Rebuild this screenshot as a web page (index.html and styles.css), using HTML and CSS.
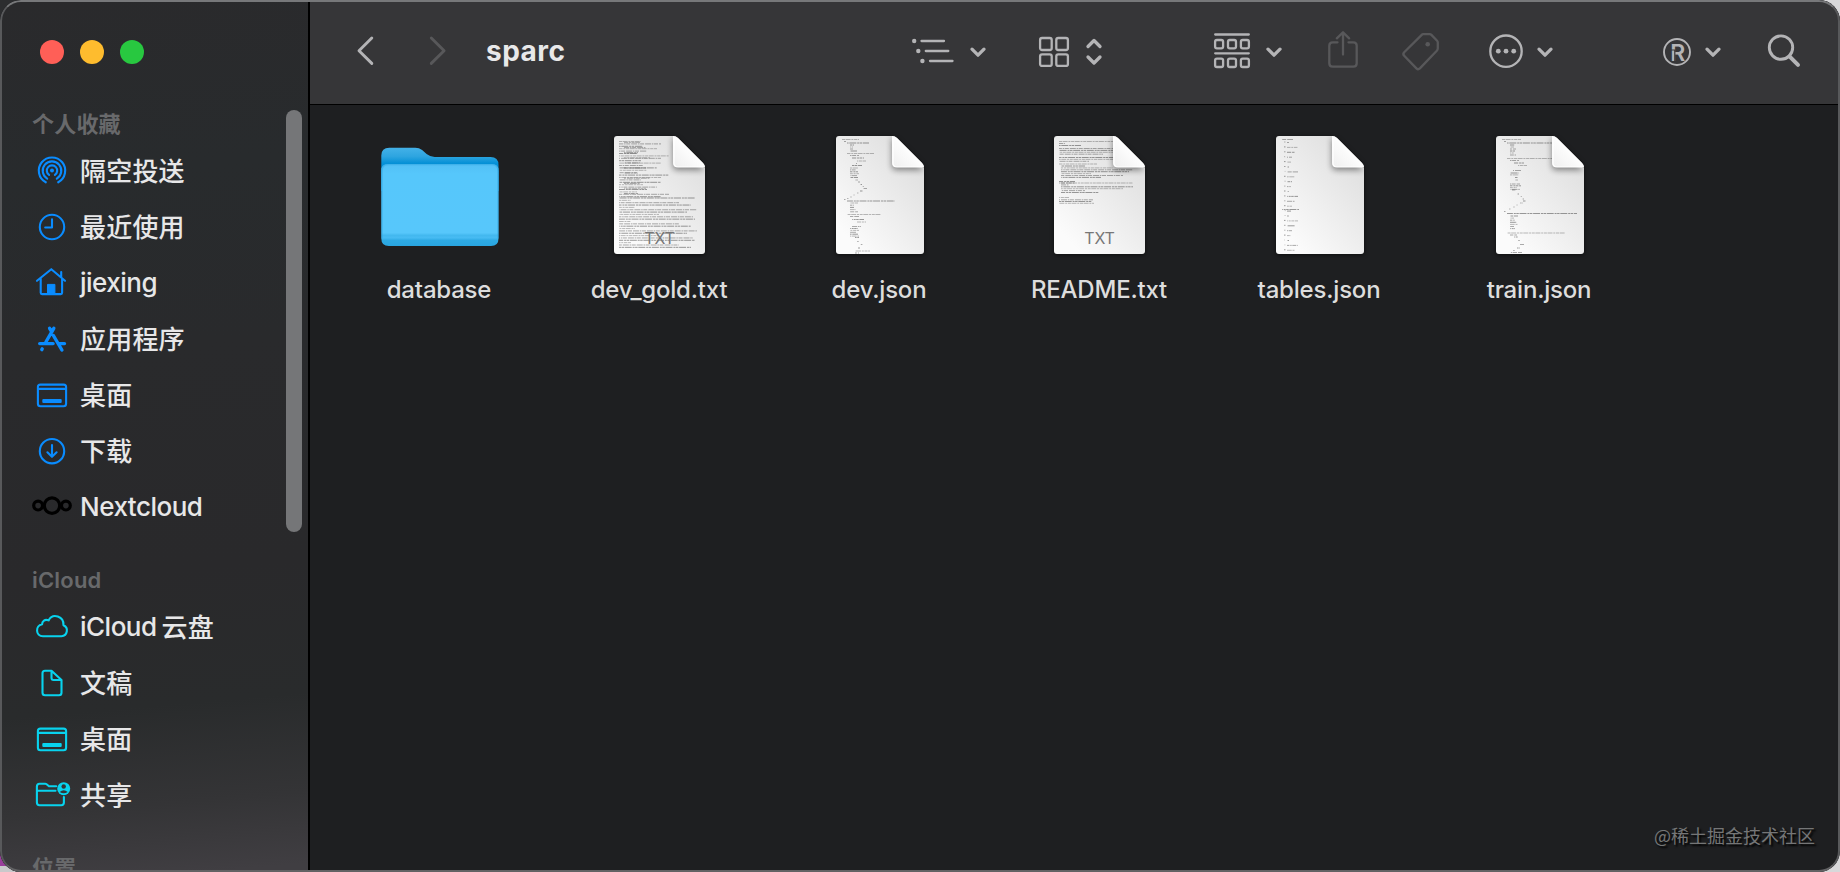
FILE: index.html
```html
<!DOCTYPE html>
<html lang="zh-CN">
<head>
    <meta charset="UTF-8">
    <meta name="viewport" content="width=device-width, initial-scale=1.0">
    <title>sparc</title>
    <link rel="stylesheet" href="styles.css">
</head>
<body>

<div class="window">
    <aside class="sidebar">
        <div class="lights">
            <span class="light red"></span>
            <span class="light yellow"></span>
            <span class="light green"></span>
        </div>

        <h2>个人收藏</h2>
        <ul class="blue">
            <li>
                <svg class="icon" viewBox="0 0 40 40"><circle cx="20" cy="19.6" r="2" fill="currentColor" stroke="none"/><path d="M17.1 23.9a5.2 5.2 0 1 1 5.8 0M15.2 27.6a9.3 9.3 0 1 1 9.6 0M13.8 31.3a13.2 13.2 0 1 1 12.4 0"/></svg>
                隔空投送
            </li>
            <li>
                <svg class="icon" viewBox="0 0 40 40"><circle cx="20" cy="20" r="12.2"/><path d="M20 12.3v8.2h-6.8"/></svg>
                最近使用
            </li>
            <li>
                <svg class="icon" viewBox="0 0 40 40"><path d="M5 17.8L19.3 6.2L33 17.8M8.7 15.5v14.3q0 1.3 1.3 1.3h18.8q1.3 0 1.3-1.3V15.5M29.2 9v5.5"/><path d="M15.5 31v-9.6h7.4V31z" fill="currentColor" stroke-width="1"/></svg>
                <span class="latin">jiexing</span>
            </li>
            <li>
                <svg class="icon" viewBox="0 0 40 40"><path class="thick" d="M7.7 24.6h13.4M27 24.6h5.5M17.6 9.3l2 3.4M21.8 9.3L13.9 23M21.4 16.5L29.9 31M10.2 29.9l-.4.7"/></svg>
                应用程序
            </li>
            <li>
                <svg class="icon" viewBox="0 0 40 40"><rect x="5.9" y="9.6" width="28.2" height="21.6" rx="2.5"/><path d="M6 13.9h28"/><rect x="10.3" y="24" width="19.4" height="4" rx="1" fill="currentColor" stroke="none"/></svg>
                桌面
            </li>
            <li>
                <svg class="icon" viewBox="0 0 40 40"><circle cx="20" cy="20.2" r="12.2"/><path d="M20 14v11.5M15.4 21.3l4.6 4.5l4.6-4.5"/></svg>
                下载
            </li>
            <li>
                <svg class="icon nextcloud" viewBox="0 0 40 40"><circle cx="20" cy="18.6" r="7.7"/><circle cx="6.1" cy="18.6" r="4.4"/><circle cx="33.9" cy="18.6" r="4.4"/></svg>
                <span class="latin">Nextcloud</span>
            </li>
        </ul>

        <h2>iCloud</h2>
        <ul class="cyan">
            <li>
                <svg class="icon" viewBox="0 0 40 40"><path d="M11 29.2h18.5a5.7 5.7 0 0 0 2-10.9C32 9.5 20.8 5.5 16.6 13.4C13 11.8 10 14 10.1 17.3C3.2 18.6 3.3 29.2 11 29.2z"/></svg>
                <span class="latin">iCloud</span><span class="gap">云盘</span>
            </li>
            <li>
                <svg class="icon" viewBox="0 0 40 40"><path d="M19.5 7.8h-6.500q-2.500 0-2.500 2.500v19.500q0 2.500 2.500 2.500h14q2.500 0 2.500-2.500V17zM19.500 8v7q0 2 2 2h8"/></svg>
                文稿
            </li>
            <li>
                <svg class="icon" viewBox="0 0 40 40"><rect x="5.9" y="9.6" width="28.2" height="21.6" rx="2.5"/><path d="M6 13.9h28"/><rect x="10.3" y="24" width="19.4" height="4" rx="1" fill="currentColor" stroke="none"/></svg>
                桌面
            </li>
            <li>
                <svg class="icon" viewBox="0 0 40 40"><path d="M24.2 11.3h-7.2l-2.4-2q-.6-.5-1.4-.5H7.5q-2.6 0-2.6 2.6v16.2q0 2.6 2.6 2.6h21.8q2.6 0 2.6-2.6V22M5 15.7h18.5"/><circle cx="31.7" cy="13.7" r="6.500" fill="currentColor" stroke="none"/><circle cx="31.7" cy="11.5" r="2.2" class="cut"/><path class="cut" d="M27.7 17q4-3.600 8 0q-4 2.600-8 0z"/></svg>
                共享
            </li>
        </ul>

        <h2>位置</h2>
        <div class="scrollbar"></div>
    </aside>

    <main class="main">
        <header class="toolbar">
            <svg class="back" width="16" height="40"><path d="M14.8 6L2 18.700L14.8 31.400"/></svg>
            <svg class="forward off" width="16" height="40"><path d="M1.3 6L14.1 18.700L1.3 31.400"/></svg>
            <h1>sparc</h1>

            <svg class="outline" width="42" height="40"><g class="dots"><circle cx="2.2" cy="9" r="2.2"/><circle cx="6.3" cy="19" r="2.2"/><circle cx="10.4" cy="29" r="2.2"/></g><path d="M9.500 9h22.500M13.800 19h22.500M18 29h22.500"/></svg>
            <svg class="chevron" width="16" height="40"><path d="M2 17.200l6 6l6-6"/></svg>

            <svg class="grid" width="30" height="40"><rect x="1.1" y="6" width="11.6" height="12" rx="2"/><rect x="17.3" y="6" width="11.6" height="12" rx="2"/><rect x="1.1" y="22.3" width="11.6" height="11.6" rx="2"/><rect x="17.3" y="22.3" width="11.6" height="11.6" rx="2"/></svg>
            <svg class="updown" width="16" height="40"><path d="M2 14.500l6-6l6 6M2 25l6 6l6-6"/></svg>

            <svg class="group" width="36" height="40"><path d="M1.2 2.500h33.600M1.2 21.300h33.600"/><rect x="1.1" y="8" width="8" height="8.400" rx="1.8"/><rect x="14" y="8" width="8" height="8.400" rx="1.8"/><rect x="26.9" y="8" width="8" height="8.400" rx="1.8"/><rect x="1.1" y="26.600" width="8" height="8.400" rx="1.8"/><rect x="14" y="26.600" width="8" height="8.400" rx="1.8"/><rect x="26.9" y="26.600" width="8" height="8.400" rx="1.8"/></svg>
            <svg class="chevron" width="16" height="40"><path d="M2 17.200l6 6l6-6"/></svg>

            <svg class="share off" width="30" height="40"><path d="M9.500 10.300H4.700q-3.400 0-3.400 3.400v17.600q0 3.400 3.400 3.400h20.600q3.400 0 3.400-3.400V13.700q0-3.400-3.400-3.400H20.500M15 22.500V.8M8.800 6.300L15 .3l6.200 6"/></svg>
            <svg class="tag off" width="38" height="40"><path d="M20 2.600L2.200 20.200q-1.700 1.800 0 3.600l12.200 12.600q1.700 1.600 3.500 0L34.800 18.800q1-1.100 1-2.500V10.500q0-1-.7-1.700L29.400 2.900q-.7-.7-1.700-.7H21q-.6 0-1 .4z"/><circle cx="25.700" cy="12.300" r="2.300" class="solid"/></svg>

            <svg class="more" width="34" height="40"><circle cx="17" cy="19.200" r="15.700"/><g class="dots"><circle cx="9.300" cy="19.200" r="2.400"/><circle cx="17" cy="19.200" r="2.400"/><circle cx="24.700" cy="19.200" r="2.400"/></g></svg>
            <svg class="chevron close" width="16" height="40"><path d="M2 17.200l6 6l6-6"/></svg>

            <svg class="badge" width="28" height="40"><circle cx="14" cy="20" r="13"/><text x="7.200" y="28.500">R</text><path class="slit" d="M6 18h6.500M11.800 18v12"/></svg>
            <svg class="chevron close" width="16" height="40"><path d="M2 17.200l6 6l6-6"/></svg>

            <svg class="search" width="32" height="40"><circle cx="13" cy="15.600" r="11.700"/><path d="M21.500 24.300l8.500 8.500"/></svg>
        </header>

        <section class="files">
            <div class="file">
                <svg class="thumb" width="120" height="120">
                    <defs>
                        <linearGradient id="folderBack" x1="0" y1="0" x2="0" y2="1"><stop offset="0" stop-color="#43b1e8"/><stop offset=".2" stop-color="#2ea5e0"/><stop offset=".36" stop-color="#0590d6"/></linearGradient>
                        <linearGradient id="folderFront" x1="0" y1="0" x2="0" y2="1"><stop offset="0" stop-color="#52bff5"/><stop offset=".12" stop-color="#56c7fb"/><stop offset=".84" stop-color="#57c7fb"/><stop offset=".87" stop-color="#43b8ef"/><stop offset=".9" stop-color="#47bbf3"/><stop offset=".93" stop-color="#2eaae4"/><stop offset="1" stop-color="#29a5e0"/></linearGradient>
                    </defs>
                    <path fill="url(#folderBack)" d="M1.300 19.500q0-7.800 8-7.800h26q3.800 0 6.800 2.200l4.500 4.200q3.600 2.900 8 2.900H110.500q8 0 8 8V55H1.300z"/>
                    <path fill="url(#folderFront)" d="M1.300 34.500q0-6.500 6.500-6.500H112q6.500 0 6.500 6.500V102.500q0 7.500-7.500 7.500H8.800q-7.500 0-7.500-7.500z"/>
                    <path class="folder-edge" d="M2 102V35q0-6.300 6-6.300H112q6 0 6 6.300V102"/>
                </svg>
                <span>database</span>
            </div>
            <div class="file" data-kind="gold"><span>dev_gold.txt</span></div>
            <div class="file" data-kind="dev"><span>dev.json</span></div>
            <div class="file" data-kind="readme"><span>README.txt</span></div>
            <div class="file" data-kind="tables"><span>tables.json</span></div>
            <div class="file" data-kind="train"><span>train.json</span></div>
        </section>

        <div class="watermark">@稀土掘金技术社区</div>
    </main>
</div>

<script src="script.js"></script>
</body>
</html>
```
FILE: styles.css
```css
body {
    margin: 0;
    width: 1840px;
    height: 872px;
    overflow: hidden;
    background: linear-gradient(#2c2d2f 0 50%, transparent 50%) 0 0 / 50% 100% no-repeat,
        linear-gradient(#9a3f9c 0 866px, #c9c9cb 866px) 0 0 / 50% 100% no-repeat,
        #d8d8da;
    font-family: Inter, "Noto Sans CJK SC", sans-serif;
}

svg {
    fill: none;
    stroke: currentColor;
    stroke-linecap: round;
    stroke-linejoin: round;
    flex: none;
    overflow: visible;
}

.window {
    position: relative;
    display: flex;
    height: 872px;
    border-radius: 21px;
    overflow: hidden;
    background: #1e1f21;
}

/* thin light rim over everything */
.window::after {
    content: "";
    position: absolute;
    inset: 0;
    border: 2px solid #58595b;
    border-top-color: #77787a;
    border-bottom-color: #626264;
    border-radius: 21px;
    pointer-events: none;
}

/* Sidebar */
.sidebar {
    position: relative;
    box-sizing: border-box;
    width: 310px;
    height: 872px;
    flex: none;
    overflow: hidden;
    border-right: 2px solid #000;
    background: linear-gradient(175deg, #2a2a2c 0%, #282b2d 20%, #292a2c 40%, #29292b 65%, #292b2c 80%, #343436 91%, #403e42 99%);
}

.lights {
    display: flex;
    gap: 16px;
    padding: 40px 0 41px 40px;
}

.light {
    width: 24px;
    height: 24px;
    border-radius: 50%;
}

.red { background: #ff5f57; }
.yellow { background: #febc2e; }
.green { background: #28c840; }

.sidebar h2 {
    margin: 0;
    padding-left: 32px;
    height: 38px;
    line-height: 38px;
    font-size: 22px;
    font-weight: 600;
    letter-spacing: .2px;
    color: #68696b;
}

.sidebar ul {
    list-style: none;
    margin: 0 0 26px;
    padding: 0;
}

.sidebar li {
    box-sizing: border-box;
    display: flex;
    align-items: center;
    height: 56px;
    padding: 0 0 4px 32px;
    font-size: 26px;
    font-weight: 500;
    letter-spacing: .2px;
    color: #e7e7e8;
}

.icon {
    width: 40px;
    height: 40px;
    margin: 4px 8px 0 0;
    stroke-width: 2.1;
}

.blue .icon { color: #0a8cff; }
.cyan .icon { color: #08d3ee; }
.icon .thick { stroke-width: 3.4; }
.icon .cut { fill: #343436; stroke: none; }

.blue .nextcloud {
    color: #000;
    stroke-width: 3.2;
}

.latin {
    padding-top: 2px;
    letter-spacing: -.5px;
}

.gap { margin-left: 5px; }

.scrollbar {
    position: absolute;
    left: 286px;
    top: 110px;
    width: 16px;
    height: 422px;
    border-radius: 8px;
    background: #757678;
}

/* Toolbar */
.main {
    display: flex;
    flex-direction: column;
    flex: 1;
}

.toolbar {
    display: flex;
    align-items: center;
    height: 104px;
    border-bottom: 1px solid #000;
    background: #363638;
    color: #b4b4b6;
    padding-left: 47px;
}

.toolbar svg { stroke-width: 2.3; }
.toolbar .off { color: #58585a; }
.toolbar .dots, .toolbar .solid { fill: currentColor; stroke: none; }
.toolbar .back, .toolbar .forward { stroke-width: 2.9; }
.toolbar .chevron, .toolbar .updown { stroke-width: 3.3; }

.toolbar h1 {
    width: 384px;
    margin: 0 0 0 40px;
    font-size: 28px;
    line-height: 38px;
    padding-bottom: 2px;
    font-weight: 700;
    letter-spacing: .5px;
    color: #e8e8e9;
}

.forward { margin-left: 57px; }
.outline { margin-left: 42px; }
.chevron { margin-left: 16px; }
.chevron.close { margin-left: 14px; }
.grid { margin-left: 53px; }
.updown { margin-left: 17px; }
.group { margin-left: 112px; }
.share { margin-left: 46px; }
.tag { margin-left: 44px; }
.more { margin-left: 49px; }
.badge { margin-left: 110px; }
.search { margin-left: 47px; }

.toolbar .badge { stroke-width: 1.9; }

.badge text {
    font-size: 23px;
    font-weight: 600;
    fill: currentColor;
    stroke: none;
}

.badge .slit {
    stroke: #363638;
    stroke-width: 1.2;
    stroke-linecap: butt;
}

.toolbar .search { stroke-width: 2.9; }
.search path { stroke-width: 4; }

/* Files */
.files {
    display: flex;
    padding: 31px 0 0 20px;
    flex: 1;
}

.file {
    display: flex;
    flex-direction: column;
    align-items: center;
    width: 220px;
    font-size: 24px;
    font-weight: 500;
    letter-spacing: -.2px;
    color: #dddddd;
}

.file span {
    line-height: 36px;
    margin: 16px 2px 0 0;
    white-space: nowrap;
}

.thumb { stroke: none; }

.folder-edge {
    stroke: #2ba4df;
    stroke-opacity: .5;
    stroke-width: 1.3;
}

.page {
    filter: drop-shadow(0 1px 2px rgba(0, 0, 0, .6));
}

.rows path {
    stroke: #333;
    stroke-width: 1;
    stroke-linecap: butt;
}

.fold-shadow {
    fill: #000;
    opacity: .45;
    filter: blur(3px);
}

.fold-edge {
    stroke: #fff;
    stroke-width: 1.2;
}

.ext {
    font-size: 16px;
    font-weight: 400;
    fill: #777;
    text-anchor: middle;
}

.watermark {
    align-self: flex-end;
    padding: 0 25px 23px 0;
    font-family: "Noto Sans CJK SC", sans-serif;
    font-size: 18px;
    line-height: 28px;
    color: #757677;
    text-shadow: 2px 2px 2px #000;
}
```
FILE: script.js
```javascript
// Miniature text of each page: [x, y, width] per row
const previews = {
    gold: [],
    dev: [],
    readme: [],
    tables: [],
    train: []
};

// n rows stacked below each other
function block(kind, x, y, n, step, widths) {
    for (let i = 0; i < n; i++) {
        previews[kind].push([x, y + i * step, widths[i % widths.length]]);
    }
}

block("gold", 5, 5.5, 24, 2.4, [22, 42, 24, 38, 28, 18, 50, 42]);
block("gold", 10, 6.5, 11, 5.1, [16, 22, 14, 26]);
block("gold", 5, 62, 22, 2.35, [76, 12, 60, 72, 16, 78, 68, 40, 74]);

previews.dev = [[6, 3.5, 17], [8, 5.5, 2], [11, 7, 22], [11, 17.5, 27], [14, 19.5, 9], [16, 22, 12],
    [21, 25, 9], [20, 27.5, 2], [16, 29.5, 10], [19, 44, 3], [22, 46, 2], [24, 48.5, 2], [26, 50.5, 2],
    [27, 52.5, 4], [24, 55, 3], [21, 57, 1.5], [17, 59, 1.5], [14, 61, 1.5], [11, 62.5, 1.5], [8, 63.5, 2],
    [11, 65, 48], [11, 78.5, 34], [14, 80.5, 9], [16, 83.5, 12], [21, 86, 9], [16, 90.5, 9],
    [19, 101.5, 4], [21, 105.5, 2], [24, 108.5, 3], [22, 112, 2], [19, 115, 15], [19, 117, 4]];
block("dev", 14, 9, 4, 2, [4, 3, 3, 7]);
block("dev", 14, 32, 6, 1.9, [8, 6, 8, 9, 7]);
block("dev", 14, 67, 5, 2.2, [8, 4, 4, 6]);
block("dev", 14, 92.5, 5, 1.9, [8, 9, 6]);

previews.readme = [[5, 5.5, 72], [5, 7.5, 6], [5, 9.5, 22], [5, 28, 38], [5, 47, 16], [5, 45.5, 16],
    [5, 61.5, 10], [5, 63.8, 34], [5, 65.5, 33], [5, 67.3, 35]];
block("readme", 5, 12.5, 4, 1.9, [72, 58, 68, 44]);
block("readme", 5, 21.5, 3, 1.9, [66, 74, 30]);
block("readme", 7, 30, 7, 1.9, [24, 56, 72, 68, 30, 62, 40]);
block("readme", 7, 47, 6, 1.9, [72, 8, 72, 62, 24, 38]);

for (let i = 0; i < 23; i++) {
    previews.tables.push([8, 6 + i * 4.9, 1.5]);
    previews.tables.push([11, 6.5 + i * 4.9, [2, 11, 8, 5, 4][i % 5]]);
}
previews.tables.push([6, 3.5, 11], [6, 73.5, 17]);

previews.train = [[6, 3.5, 19], [8, 5.5, 2], [11, 7, 55], [11, 22.5, 62], [14, 24.5, 9],
    [18, 27, 10], [22, 29.5, 9], [17, 34.5, 8], [19, 41.5, 3], [19, 44, 3], [16, 54, 4], [21, 58, 2],
    [24, 60.5, 2], [26, 63, 2], [27, 65, 3], [24, 67, 3], [20, 69, 1.5], [17, 71, 1.5], [13, 73, 1.5],
    [8, 75.5, 2], [11, 77.5, 70], [11, 97, 58], [14, 99, 7], [18, 101, 4], [22, 104.5, 2],
    [24, 108.5, 4], [21, 112, 3], [17, 114.5, 2], [14, 116.5, 12]];
block("train", 14, 9, 6, 2, [5, 4, 6]);
block("train", 14, 37, 2, 1.9, [9]);
block("train", 14, 48, 4, 1.8, [10, 11, 7]);
block("train", 14, 80, 7, 2.1, [8, 4, 5, 7]);

const dashes = ["3 .6 5 .8 2 .7", "6 .8 1.5 .6 4 1", "2 .5 2.5 .7 7 .9"];

function drawPage(kind) {
    const isText = kind === "gold" || kind === "readme";
    const w = isText ? 91 : 88;
    const f = w - 32;
    const rows = previews[kind].map(([x, y, len], i) => {
        const end = Math.min(x + len, y < 32 ? f : w - 5);
        return `<path d="M${x} ${y}H${end}" stroke-dasharray="${dashes[i % 3]}" stroke-dashoffset="${i * 1.7}" opacity="${0.32 + (i % 3) * 0.08}"/>`;
    }).join("");

    // text pages are an odd width, one more px keeps them on the pixel grid
    return `<svg class="thumb" width="${isText ? 92 : 88}" height="120">
        <defs>
            <linearGradient id="paper-${kind}" x1=".9" y1=".3" x2=".3" y2="1"><stop offset="0" stop-color="#e2e2e2"/><stop offset="1" stop-color="#fbfbfb"/></linearGradient>
            <linearGradient id="fold-${kind}" x1="1" y1="0" x2="0" y2="1"><stop offset=".4" stop-color="#fff"/><stop offset="1" stop-color="#efefef"/></linearGradient>
            <clipPath id="clip-${kind}"><path d="M3 0H${f}L${w} 31V115q0 3-3 3H3q-3 0-3-3V3q0-3 3-3z"/></clipPath>
        </defs>
        <path class="page" fill="url(#paper-${kind})" d="M3 0H${f}q3 0 5 2L${w - 2} 27q2 2 2 5V115q0 3-3 3H3q-3 0-3-3V3q0-3 3-3z"/>
        <g clip-path="url(#clip-${kind})">
            <g class="rows">${rows}</g>
            <path class="fold-shadow" d="M${f} 0V30q0 4 4 4H${w}z"/>
        </g>
        <path fill="url(#fold-${kind})" d="M${f} 0q3 0 5 2L${w - 2} 27q2 2 2 4H${f + 4}q-4 0-4-4z"/>
        <path class="fold-edge" d="M${f + 1} 2V27q0 4 4 4H${w - 2}"/>
        ${isText ? `<text class="ext" x="${w / 2}" y="108">TXT</text>` : ""}
    </svg>`;
}

document.querySelectorAll(".file[data-kind]").forEach(file => {
    file.insertAdjacentHTML("afterbegin", drawPage(file.dataset.kind));
});
```
